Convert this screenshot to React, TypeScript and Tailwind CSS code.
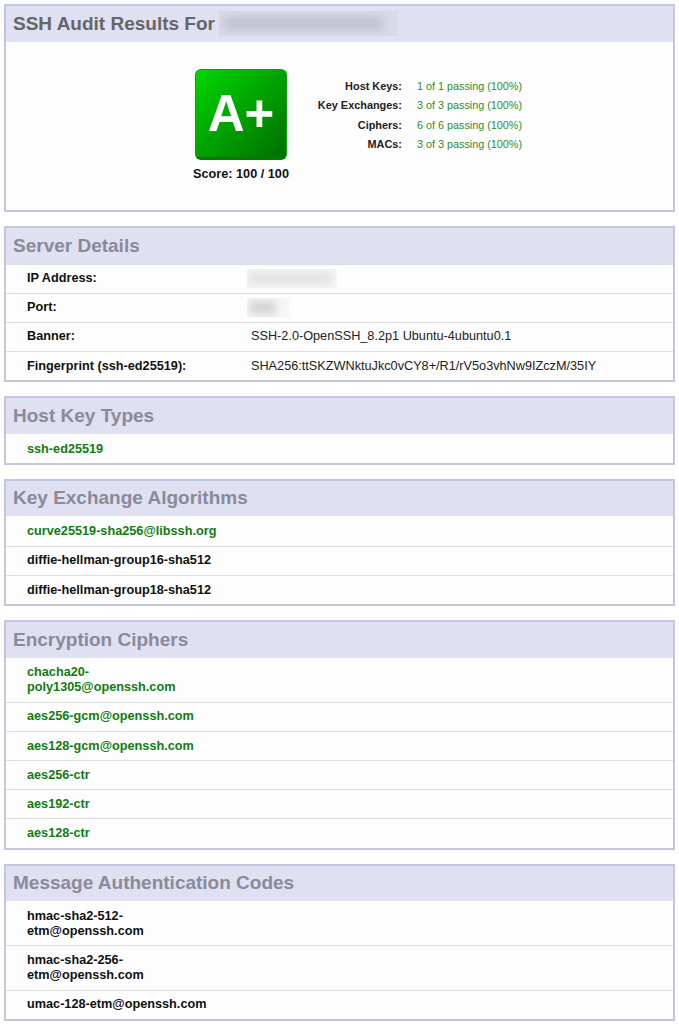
const FONT = "font-['Liberation_Sans',Arial,sans-serif]";

type Row = { text: string; good?: boolean };

function Card({ title, children }: { title: React.ReactNode; children: React.ReactNode }) {
  return (
    <section className="border-2 border-[#c5c5e0] bg-[#fdfdfd] mb-[14px]">
      <h2 className="h-[35.5px] bg-[#e0e0f3] pl-[7px] flex items-center text-[19px] font-bold text-[#8a8a99]">{title}</h2>
      {children}
    </section>
  );
}

function DetailRow({ label, children }: { label: string; children: React.ReactNode }) {
  return (
    <div className="flex items-center min-h-[29.2px] border-t border-[#dddddd] first:border-t-transparent text-[12.7px]">
      <div className="w-[241px] pl-[21px] font-bold text-[#111111]">{label}</div>
      <div className="pl-[4px] text-[#222222]">{children}</div>
    </div>
  );
}

function AlgoList({ rows }: { rows: Row[] }) {
  return (
    <div>
      {rows.map((r) => (
        <div
          key={r.text}
          className={`flex items-center min-h-[29.2px] pt-[6.8px] pb-[6.4px] border-t border-[#dddddd] first:border-t-transparent pl-[21px] text-[12.7px] leading-[15px] font-bold ${r.good ? "text-[#107c10]" : "text-[#111111]"}`}
        >
          <span className="w-[195px] break-words">{r.text}</span>
        </div>
      ))}
    </div>
  );
}

function Blurred({ w, h, inner }: { w: number; h: number; inner: string }) {
  return (
    <span className="relative block overflow-hidden bg-[#f6f6f6]" style={{ width: w, height: h }}>
      <span className={`absolute top-[16%] bottom-[16%] blur-[4px] ${inner}`} />
    </span>
  );
}

const stats = [
  ["Host Keys:", "1 of 1 passing (100%)"],
  ["Key Exchanges:", "3 of 3 passing (100%)"],
  ["Ciphers:", "6 of 6 passing (100%)"],
  ["MACs:", "3 of 3 passing (100%)"],
];

export default function App() {
  return (
    <div className={`${FONT} bg-white h-[1024px] overflow-hidden pt-[4px] px-[4px]`}>
      <Card
        title={
          <span className="flex items-center text-[#666666]">
            SSH Audit Results For
            <span className="relative ml-[4px] block w-[178px] h-[25px] overflow-hidden bg-[#d9d9ea]">
              <span className="absolute left-[5px] right-[14px] top-[6px] bottom-[6px] bg-[#c0c0d0] blur-[4px]" />
            </span>
          </span>
        }
      >
        <div className="h-[168.5px] flex pl-[189px] pt-[27.5px]">
          <div className="flex flex-col items-center w-[92px]">
            <div className="w-[92px] h-[91px] rounded-[6px] border border-[#00a800] border-b-[3px] border-b-[#007a00] bg-gradient-to-br from-[#00d800] to-[#006f00] flex items-center justify-center text-white font-bold text-[51px] leading-none">
              A+
            </div>
            <div className="mt-[5px] text-[12.7px] font-bold text-[#111111] whitespace-nowrap">Score: 100 / 100</div>
          </div>
          <div className="ml-[30px] mt-[7px] text-[10.9px]">
            {stats.map(([label, val]) => (
              <div key={label} className="flex h-[19.5px] items-center">
                <span className="w-[85px] text-right font-bold text-[#222222] whitespace-nowrap">{label}</span>
                <span className="ml-[15px] text-[10.8px] text-[#2e8b2e] whitespace-nowrap">{val}</span>
              </div>
            ))}
          </div>
        </div>
      </Card>

      <Card title="Server Details">
        <DetailRow label="IP Address:"><span className="-ml-[4px] block"><Blurred w={90} h={19} inner="left-[2%] right-[6%] bg-[#e2e2e2]" /></span></DetailRow>
        <DetailRow label="Port:"><span className="-ml-[4px] block"><Blurred w={42} h={19} inner="left-[8%] right-[32%] bg-[#d2d2d2]" /></span></DetailRow>
        <DetailRow label="Banner:">SSH-2.0-OpenSSH_8.2p1 Ubuntu-4ubuntu0.1</DetailRow>
        <DetailRow label="Fingerprint (ssh-ed25519):">SHA256:ttSKZWNktuJkc0vCY8+/R1/rV5o3vhNw9IZczM/35IY</DetailRow>
      </Card>

      <Card title="Host Key Types">
        <AlgoList rows={[{ text: "ssh-ed25519", good: true }]} />
      </Card>

      <Card title="Key Exchange Algorithms">
        <AlgoList
          rows={[
            { text: "curve25519-sha256@libssh.org", good: true },
            { text: "diffie-hellman-group16-sha512" },
            { text: "diffie-hellman-group18-sha512" },
          ]}
        />
      </Card>

      <Card title="Encryption Ciphers">
        <AlgoList
          rows={[
            { text: "chacha20-poly1305@openssh.com", good: true },
            { text: "aes256-gcm@openssh.com", good: true },
            { text: "aes128-gcm@openssh.com", good: true },
            { text: "aes256-ctr", good: true },
            { text: "aes192-ctr", good: true },
            { text: "aes128-ctr", good: true },
          ]}
        />
      </Card>

      <Card title="Message Authentication Codes">
        <AlgoList
          rows={[
            { text: "hmac-sha2-512-etm@openssh.com" },
            { text: "hmac-sha2-256-etm@openssh.com" },
            { text: "umac-128-etm@openssh.com" },
          ]}
        />
      </Card>
    </div>
  );
}
